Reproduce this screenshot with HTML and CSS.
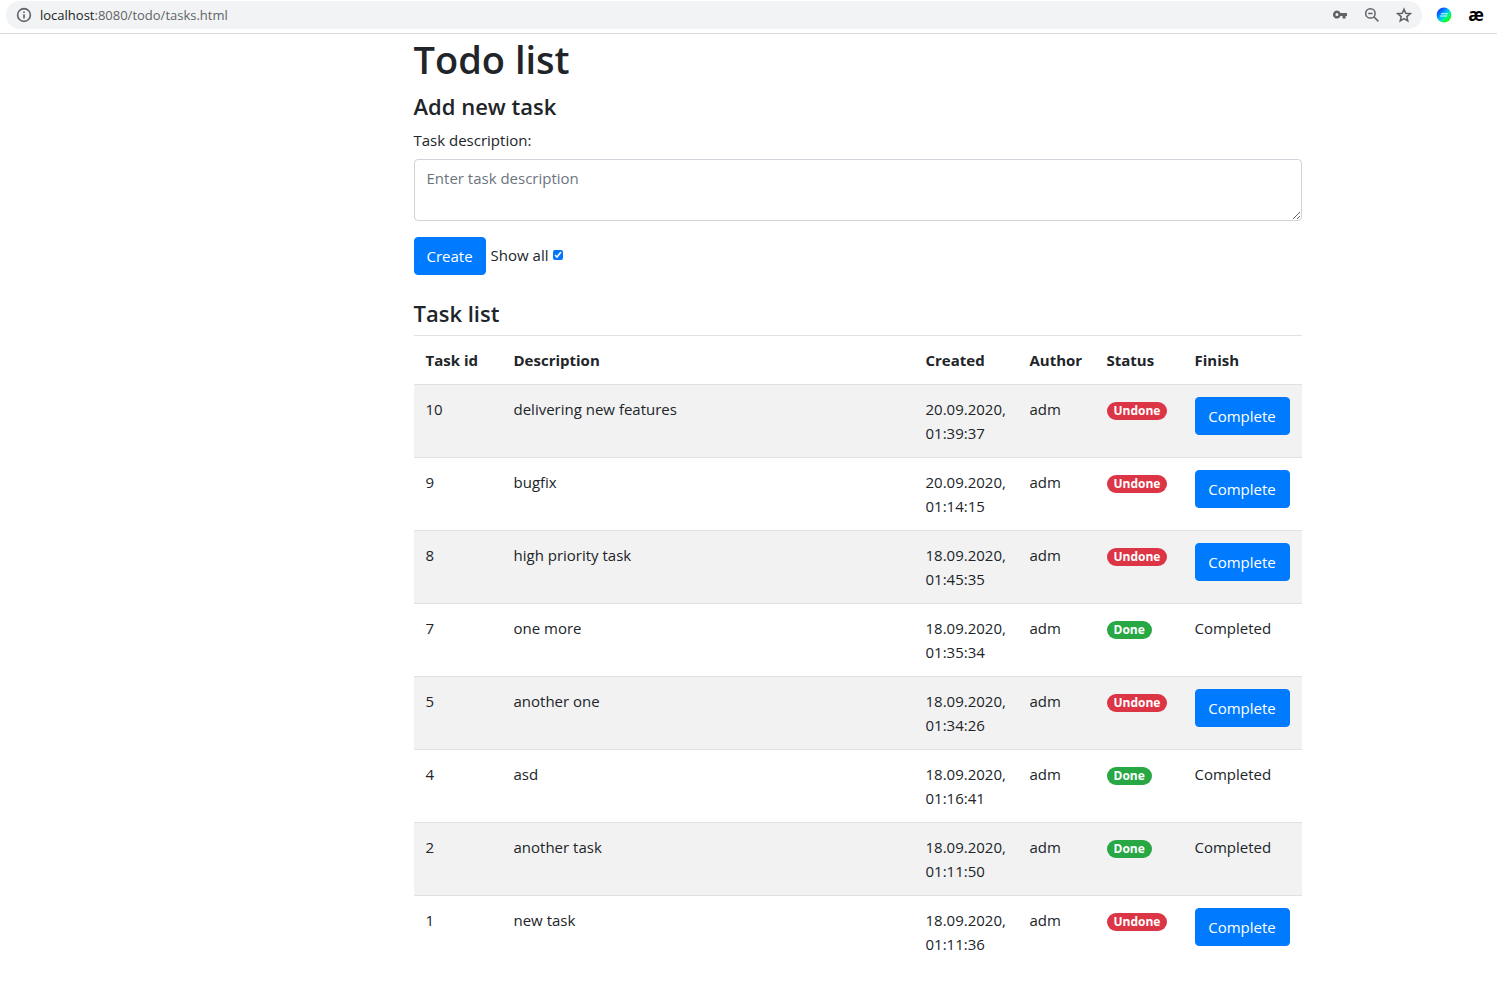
FILE: index.html
```html
<!DOCTYPE html>
<html lang="en">
<head>
<meta charset="utf-8">
<title>Todo list</title>
<link rel="stylesheet" href="styles.css">
</head>
<body>
<header class="toolbar">
  <div class="address">
    <button class="icon-btn" type="button" aria-label="Site information">
      <svg width="16" height="16" viewBox="0 0 16 16" fill="none" stroke="#5f6368" stroke-width="1.6"><circle cx="8" cy="8" r="6.4"/><path d="M8 7.2v4.2M8 4.4v1.6"/></svg>
    </button>
    <span class="url"><span class="host">localhost</span>:8080/todo/tasks.html</span>
    <div class="actions">
      <button class="icon-btn" type="button" aria-label="Passwords">
        <svg width="16" height="16" viewBox="0 0 16 16" fill="#5f6368" fill-rule="evenodd"><path d="M8.6 6.1A4 4 0 1 0 8.6 9.1H10.5V11.6H13.6V9.1H15V6.1ZM4.9 6.1a1.5 1.5 0 1 1 0 3a1.5 1.5 0 1 1 0-3Z"/></svg>
      </button>
      <button class="icon-btn" type="button" aria-label="Zoom">
        <svg width="16" height="16" viewBox="0 0 16 16" fill="none" stroke="#5f6368" stroke-width="1.5"><circle cx="6.4" cy="6.4" r="4.7"/><path d="M9.8 9.8l4.6 4.6M4.2 6.4h4.4"/></svg>
      </button>
      <button class="icon-btn" type="button" aria-label="Bookmark">
        <svg width="16" height="16" viewBox="0 0 16 16" fill="none" stroke="#5f6368" stroke-width="1.5"><path d="M8 2.2l1.7 4.1 4.5.4-3.4 2.9 1 4.4L8 11.7 4.2 14l1-4.4-3.4-2.9 4.5-.4z"/></svg>
      </button>
    </div>
  </div>
  <div class="extensions">
    <button class="icon-btn" type="button" aria-label="Color extension">
      <svg width="16" height="16" viewBox="0 0 16 16"><defs><linearGradient id="hue" x1="0" y1="0" x2="1" y2="1"><stop offset=".1" stop-color="#0b22ff"/><stop offset=".45" stop-color="#00b4ff"/><stop offset=".62" stop-color="#00f0a0"/><stop offset=".85" stop-color="#10ff00"/></linearGradient></defs><circle cx="8" cy="8" r="7.4" fill="url(#hue)"/><path d="M5 6.8h7M4 9h7" stroke="#d8ffff" stroke-width="1.1"/></svg>
    </button>
    <button class="icon-btn ligature" type="button">æ</button>
  </div>
</header>
<main class="container">
  <div class="content">
    <h1>Todo list</h1>
    <form>
      <h4>Add new task</h4>
      <label class="field-label" for="description">Task description:</label>
      <textarea id="description" class="field" placeholder="Enter task description"></textarea>
      <div class="form-row">
        <button class="btn" type="button">Create</button>
        <div class="show-all">
          <label for="show-all">Show all</label>
          <input id="show-all" type="checkbox" checked>
        </div>
      </div>
    </form>
    <h4>Task list</h4>
    <table class="tasks">
      <colgroup><col class="col-id"><col><col class="col-created"><col class="col-author"><col class="col-status"><col class="col-finish"></colgroup>
      <thead>
        <tr><th>Task id</th><th>Description</th><th>Created</th><th>Author</th><th>Status</th><th>Finish</th></tr>
      </thead>
      <tbody>
        <tr><td>10</td><td>delivering new features</td><td>20.09.2020, 01:39:37</td><td>adm</td><td><span class="badge undone">Undone</span></td><td><button class="btn" type="button">Complete</button></td></tr>
        <tr><td>9</td><td>bugfix</td><td>20.09.2020, 01:14:15</td><td>adm</td><td><span class="badge undone">Undone</span></td><td><button class="btn" type="button">Complete</button></td></tr>
        <tr><td>8</td><td>high priority task</td><td>18.09.2020, 01:45:35</td><td>adm</td><td><span class="badge undone">Undone</span></td><td><button class="btn" type="button">Complete</button></td></tr>
        <tr><td>7</td><td>one more</td><td>18.09.2020, 01:35:34</td><td>adm</td><td><span class="badge done">Done</span></td><td>Completed</td></tr>
        <tr><td>5</td><td>another one</td><td>18.09.2020, 01:34:26</td><td>adm</td><td><span class="badge undone">Undone</span></td><td><button class="btn" type="button">Complete</button></td></tr>
        <tr><td>4</td><td>asd</td><td>18.09.2020, 01:16:41</td><td>adm</td><td><span class="badge done">Done</span></td><td>Completed</td></tr>
        <tr><td>2</td><td>another task</td><td>18.09.2020, 01:11:50</td><td>adm</td><td><span class="badge done">Done</span></td><td>Completed</td></tr>
        <tr><td>1</td><td>new task</td><td>18.09.2020, 01:11:36</td><td>adm</td><td><span class="badge undone">Undone</span></td><td><button class="btn" type="button">Complete</button></td></tr>
      </tbody>
    </table>
  </div>
</main>
</body>
</html>
```
FILE: styles.css
```css
*, *::before, *::after { box-sizing: border-box; }

body {
  margin: 0;
  background: #fff;
  color: #212529;
  font-family: "Segoe UI", "Open Sans", "Noto Sans", sans-serif;
  font-size: 15px;
  line-height: 24px;
}

button, textarea { font: inherit; }

.toolbar {
  display: flex;
  align-items: center;
  padding: 1px 13px 4px 6px;
  border-bottom: 1px solid #dadce0;
}

.address {
  display: flex;
  flex: 1;
  align-items: center;
  height: 28px;
  padding: 0 10px;
  border-radius: 14px;
  background: #f1f3f4;
}

.url {
  margin-left: 8px;
  color: #5f6368;
  font-size: 13px;
}

.host { color: #202124; }

.actions {
  display: flex;
  gap: 16px;
  margin-left: auto;
}

.extensions {
  display: flex;
  gap: 16px;
  margin-left: 14px;
}

.icon-btn {
  display: flex;
  align-items: center;
  justify-content: center;
  width: 16px;
  height: 16px;
  padding: 0;
  border: 0;
  background: none;
}

.ligature {
  color: #000;
  font-size: 17px;
  font-weight: 700;
  line-height: 16px;
}

.container {
  max-width: 1140px;
  margin: 0 auto;
  padding: 0 17px 0 13px;
}

.content { margin-left: 20%; }

h1, h4 {
  margin: 0 0 8px;
  font-weight: 600;
}

h1 {
  font-size: 38px;
  line-height: 50px;
}

h4 {
  font-size: 22px;
  line-height: 28px;
}

.field-label {
  display: block;
  margin-bottom: 7px;
}

.field {
  display: block;
  width: 100%;
  height: 62px;
  margin-bottom: 16px;
  padding: 6px 12px;
  border: 1px solid #ced4da;
  border-radius: 4px;
  resize: vertical;
}

.field::placeholder { color: #6c757d; }

.form-row {
  display: flex;
  gap: 5px;
  margin-bottom: 24px;
}

.show-all {
  display: flex;
  align-items: center;
  gap: 4px;
  height: 35px;
}

.show-all input {
  width: 10px;
  height: 10px;
  margin: 0;
  accent-color: #0075ff;
}

.btn {
  display: block;
  padding: 6px 12px;
  border: 1px solid #007bff;
  border-radius: 4px;
  background: #007bff;
  color: #fff;
}

.tasks {
  width: 100%;
  border-collapse: collapse;
  table-layout: fixed;
}

.col-id, .col-status { width: 88px; }
.col-created { width: 104px; }
.col-author { width: 77px; }
.col-finish { width: 119px; }

.tasks th, .tasks td {
  padding: 12px;
  border-top: 1px solid #dee2e6;
  text-align: left;
  vertical-align: top;
}

.tasks th { font-weight: 700; }

.tasks tbody tr:nth-child(odd) { background: #f2f2f2; }

.tasks .btn { width: 100%; }

.badge {
  display: inline-block;
  padding: 3px 7px;
  border-radius: 10px;
  color: #fff;
  font-size: 12px;
  font-weight: 700;
  line-height: 12px;
}

.undone { background: #dc3545; }
.done { background: #28a745; }
```
